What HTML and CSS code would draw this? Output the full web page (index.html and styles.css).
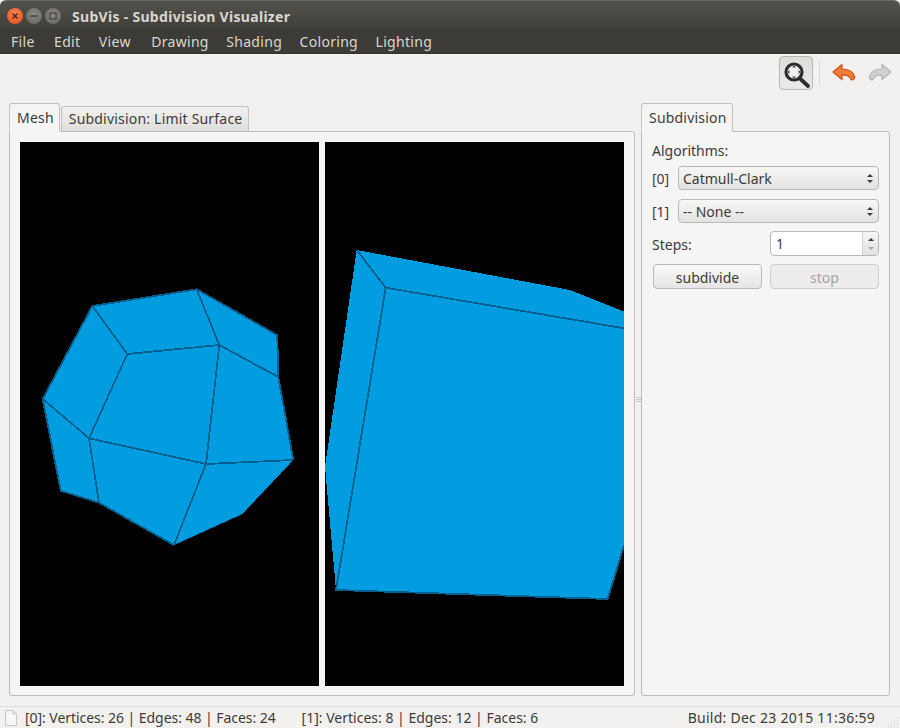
FILE: index.html
```html
<!DOCTYPE html>
<html lang="en">
<head>
<meta charset="utf-8">
<title>SubVis - Subdivision Visualizer</title>
<link rel="stylesheet" href="styles.css">
</head>
<body>
<div class="window">
  <header class="titlebar">
    <div class="win-buttons">
      <span class="win-btn close"><svg viewBox="0 0 16 16" width="16" height="16"><path d="M5.5 5.5l5 5M10.5 5.5l-5 5" stroke="#5c2410" stroke-width="1.5" fill="none"/></svg></span>
      <span class="win-btn"><svg viewBox="0 0 16 16" width="16" height="16"><path d="M4.5 8h7" stroke="#3f3e3a" stroke-width="1.4" fill="none"/></svg></span>
      <span class="win-btn"><svg viewBox="0 0 16 16" width="16" height="16"><rect x="5" y="5" width="6" height="6" stroke="#3f3e3a" stroke-width="1.2" fill="none"/></svg></span>
    </div>
    <span class="title">SubVis - Subdivision Visualizer</span>
  </header>
  <nav class="menubar">
    <span>File</span><span>Edit</span><span>View</span><span>Drawing</span><span>Shading</span><span>Coloring</span><span>Lighting</span>
  </nav>
  <div class="toolbar">
    <button class="tool-btn active" aria-label="Zoom">
      <svg viewBox="0 0 32 32" width="32" height="32">
        <circle cx="14" cy="15" r="8" fill="#f1f0ee" stroke="#2f2d2b" stroke-width="3.200"/>
        <path d="M20 21.500l8 7.500" stroke="#2f2d2b" stroke-width="3.800" stroke-linecap="round"/>
        <path d="M12 10.500h4L14 8.500zM12 19.500h4L14 21.500zM9.500 13v4L7.500 15zM18.500 13v4l2-2z" fill="#4a4846"/>
      </svg>
    </button>
    <span class="tool-sep"></span>
    <svg class="tool-icon" viewBox="0 0 26 22" width="26" height="22">
      <path d="M11 2.500L2 10l9 7.500v-4.600c4.600 0 7 .6 9.500 5 2.300-.6 3.500-1.600 3-3.600C22.500 9.800 17.500 7 11 7z" fill="#ef7d3a" stroke="#d2501a" stroke-width="1.200" stroke-linejoin="round"/>
    </svg>
    <svg class="tool-icon" viewBox="0 0 26 22" width="26" height="22">
      <path d="M15 2.500L24 10l-9 7.500v-4.600c-4.600 0-7 .6-9.500 5-2.300-.6-3.500-1.600-3-3.600C3.500 9.800 8.500 7 15 7z" fill="#d2d1cf" stroke="#b5b4b2" stroke-width="1.200" stroke-linejoin="round"/>
    </svg>
  </div>
  <main class="main">
    <section class="tabset left">
      <div class="tabs">
        <span class="tab current">Mesh</span>
        <span class="tab">Subdivision: Limit Surface</span>
      </div>
      <div class="panel views">
        <svg class="view" viewBox="20 142 299 544" preserveAspectRatio="none">
          <polygon class="face" points="92.300,306 196.700,289.300 278.300,335.700 278.300,376.700 293.300,460 242.300,514 174,545 124,517 99,502.700 60.700,490.700 42.700,399"/>
          <path class="edge" d="M92.300 306L196.700 289.300L278.300 335.700M277.300 336L278.300 377L293.300 460M92.300 306L127.300 354L219.300 345L196.700 289.300M219.300 345L278.300 377M219.300 345L206 464L293.300 460M127.300 354L89 438.300L206 464M206 464L174 545M89 438.300L42.700 399L92.300 306M89 438.300L99 502.700M42.700 399L60.700 490.700L99 502.700L174 545"/>
          <path class="edge thin" d="M174 545L242.300 514L293.300 460"/>
        </svg>
        <svg class="view" viewBox="325 142 299 544" preserveAspectRatio="none">
          <polygon class="face" points="356.700,250 570,290 624,311.700 624,545 607.700,599 336,590 325,466.700"/>
          <path class="edge" d="M356.700 250L385.700 287.700L624 328.300M385.700 287.700L336 590L607.700 599L624 545"/>
        </svg>
      </div>
    </section>
    <div class="splitter"><i></i><i></i><i></i></div>
    <section class="tabset right">
      <div class="tabs">
        <span class="tab current">Subdivision</span>
      </div>
      <div class="panel controls">
        <div class="heading">Algorithms:</div>
        <div class="algo">
          <span>[0]</span>
          <div class="combo"><span>Catmull-Clark</span><span class="updown"><b class="up"></b><b class="down"></b></span></div>
        </div>
        <div class="algo">
          <span>[1]</span>
          <div class="combo"><span>-- None --</span><span class="updown"><b class="up"></b><b class="down"></b></span></div>
        </div>
        <div class="pair steps">
          <span class="steps-label">Steps:</span>
          <div class="spin"><span class="spin-value">1</span><span class="spin-btns"><b class="up"></b><b class="down off"></b></span></div>
        </div>
        <div class="pair actions">
          <button class="btn">subdivide</button>
          <button class="btn disabled">stop</button>
        </div>
      </div>
    </section>
  </main>
  <footer class="statusbar">
    <svg class="doc" viewBox="0 0 14 16" width="14" height="16"><path d="M1.500.5h7.500l3.500 3.500v11.500h-11z" fill="#f7f7f6" stroke="#c8c7c5"/><path d="M9 .5v3.500h3.500" fill="#e4e3e1" stroke="#c8c7c5"/></svg>
    <span class="stat first">[0]: Vertices: 26 | Edges: 48 | Faces: 24</span>
    <span class="stat second">[1]: Vertices: 8 | Edges: 12 | Faces: 6</span>
    <span class="stat build">Build: Dec 23 2015 11:36:59</span>
    <svg class="grip" viewBox="0 0 12 12" width="12" height="12"><path d="M10 2h1M7 5h1M10 5h1M4 8h1M7 8h1M10 8h1M1 11h1M4 11h1M7 11h1M10 11h1" stroke="#cfcecc" fill="none"/></svg>
  </footer>
</div>
</body>
</html>
```
FILE: styles.css
```css
* { box-sizing: border-box; }
html, body { margin: 0; padding: 0; }
body {
  width: 900px; height: 728px; overflow: hidden;
  font-family: "Noto Sans", "Open Sans", sans-serif;
  font-size: 14px; color: #3c3b37; background: #f2f1f0;
}
.window { width: 900px; height: 728px; display: flex; flex-direction: column; }
.titlebar {
  height: 30px; flex: none; display: flex; align-items: center; padding: 1px 0 0 7px;
  background: linear-gradient(#54524c, #3f3e39);
  border-top: 1px solid #6a6963;
  border-radius: 6px 6px 0 0;
}
.win-buttons { display: flex; gap: 3px; }
.win-btn {
  width: 16px; height: 16px; border-radius: 50%;
  background: radial-gradient(circle at 50% 40%, #8b8a85, #62615c);
  border: 0; display: block; line-height: 0;
}
.win-btn.close { background: radial-gradient(circle at 50% 35%, #f58a56, #e0481a); }
.title { margin-left: 11px; font-weight: 700; font-size: 14px; letter-spacing: .3px; color: #d8d6cf; }
.menubar {
  height: 24px; flex: none; display: flex; align-items: center; padding: 0 0 1px 11px; gap: 18.500px;
  background: #3c3b37; color: #d9d7cf; font-size: 14px; letter-spacing: .3px; border-bottom: 1px solid #33322e;
}
.menubar span:nth-child(2) { margin-left: 1px; }
.menubar span:nth-child(4) { margin-left: 2px; }
.menubar span:nth-child(n+5) { margin-left: -1px; }
.toolbar {
  height: 49px; flex: none; display: flex; align-items: center; justify-content: flex-end;
  padding: 0 7px 11px 0;
}
.tool-btn {
  width: 34px; height: 34px; padding: 0; display: flex; align-items: center; justify-content: center;
  border: 1px solid #b9b7b3; border-radius: 4px; background: linear-gradient(#dedcd9, #eceae8);
}
.tool-sep { width: 1px; height: 26px; background: #dbdad8; margin: 0 7px 0 6px; }
.tool-icon { display: block; margin-left: 4px; }
.tool-icon + .tool-icon { margin-left: 10px; }
.main { flex: 1; min-height: 0; display: flex; padding: 0 10px 10px 9px; }
.tabset { display: flex; flex-direction: column; }
.left { width: 626px; }
.right { width: 249px; }
.splitter { width: 6px; display: flex; flex-direction: column; justify-content: center; align-items: center; gap: 1px; }
.splitter i { width: 5px; height: 1px; background: #c9c8c6; }
.tabs { display: flex; height: 29px; flex: none; align-items: flex-end; position: relative; margin-bottom: -1px; z-index: 1; letter-spacing: .2px; }
.tab {
  height: 26px; padding: 0 6px 2px 7px; display: flex; align-items: center; font-size: 14px;
  border: 1px solid #c4c2bf; border-bottom: 1px solid #bdbbb8; border-radius: 3px 3px 0 0; margin-left: 1px;
  background: linear-gradient(#f2f1f0, #dfdedc);
}
.tab.current {
  height: 29px; margin-left: 0; background: #f5f5f5; border-bottom-color: #f5f5f5; padding: 0 5px 0 7px;
}
.panel { flex: 1; min-height: 0; background: #f5f5f5; border: 1px solid #bfbdba; border-radius: 0 3px 3px 3px; }
.views { display: flex; gap: 6px; padding: 10px 10px 9px 10px; }
.view { display: block; width: 299px; height: 544px; background: #000; shape-rendering: crispEdges; }
.face { fill: #029de1; }
.edge { fill: none; stroke: #065f8c; stroke-width: 1.800; }
.edge.thin { stroke-width: .6; }
.controls { padding: 9px 10px 0 10px; font-size: 14px; }
.heading { height: 20px; line-height: 20px; margin: 0 0 5px 0; }
.algo { display: flex; align-items: center; height: 24px; margin-bottom: 9px; }
.algo > span:first-child { width: 26px; flex: none; }
.combo {
  flex: 1; height: 24px; display: flex; align-items: center; justify-content: space-between; padding: 0 5px 0 4px;
  border: 1px solid #bab8b5; border-radius: 4px; background: linear-gradient(#f7f7f6, #e3e2e0);
}
.updown, .spin-btns { display: flex; flex-direction: column; align-items: center; gap: 3px; }
.up, .down { display: block; width: 0; height: 0; border-left: 3px solid transparent; border-right: 3px solid transparent; }
.up { border-bottom: 3px solid #3c3b37; }
.down { border-top: 3px solid #3c3b37; }
.down.off { border-top-color: #a9a8a6; }
.pair { display: flex; align-items: center; justify-content: space-between; height: 25px; margin-bottom: 8px; }
.steps { margin-top: -1px; }
.steps-label { padding-top: 2px; }
.actions { padding-left: 1px; }
.spin {
  width: 109px; height: 25px; display: flex; border: 1px solid #bab8b5; border-radius: 4px; background: #fff; overflow: hidden;
}
.spin-value { flex: 1; padding-left: 5px; line-height: 23px; }
.spin-btns { width: 16px; justify-content: center; gap: 6px; border-left: 1px solid #d4d3d1; background: linear-gradient(#f6f6f5, #e2e1df); }
.btn {
  width: 109px; height: 25px; padding: 1px 0 0; font: inherit; color: #3c3b37;
  border: 1px solid #bab8b5; border-radius: 4px; background: linear-gradient(#f9f9f8, #e6e5e3);
}
.btn.disabled { color: #a5a4a2; background: #eeedec; border-color: #cfcecc; }
.statusbar {
  height: 22px; flex: none; display: flex; align-items: center; position: relative;
  border-top: 1px solid #dedddb; padding: 0 0 0 4px; font-size: 14px; background: #f2f1f0;
}
.doc { display: block; }
.stat.first { margin-left: 7px; letter-spacing: -.05px; }
.stat.second { margin-left: 26px; }
.stat.build { margin-left: auto; margin-right: 12px; letter-spacing: .26px; }
.grip { display: block; margin-right: 1px; margin-top: 8px; }
```
